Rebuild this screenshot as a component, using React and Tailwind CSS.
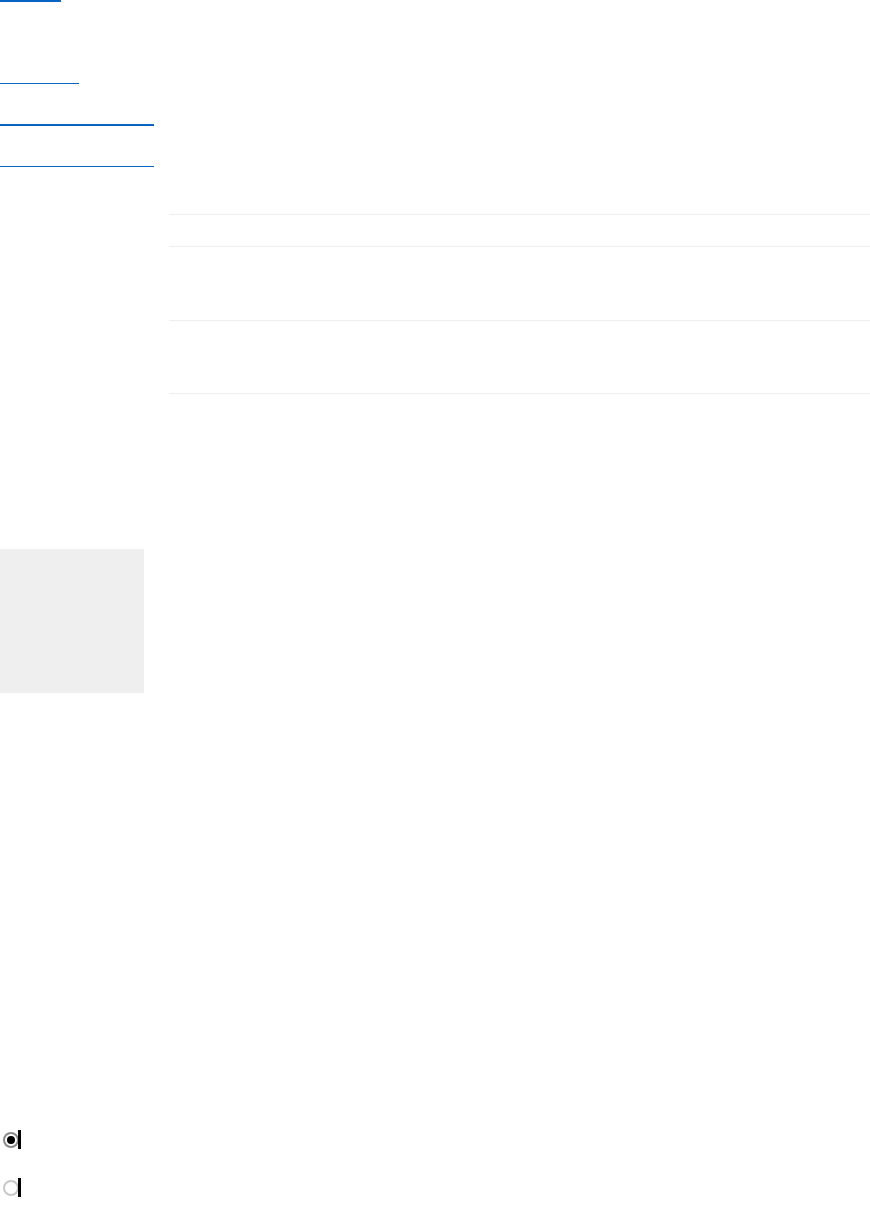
export default function App() {
  return (
    <div className="w-[870px] h-[1206px] bg-white overflow-hidden" style={{ fontFamily: '"Liberation Sans", Arial, sans-serif' }}>
      <div className="flex flex-col items-start">
        <div className="h-[2px] w-[61px] bg-[#0a64c4]" />
        <div className="mt-[81px] h-[1px] w-[79px] bg-[#0a64c4]" />
        <div className="mt-[40px] h-[2px] w-[154px] bg-[#0a64c4]" />
        <div className="mt-[40px] h-[1px] w-[154px] bg-[#0a64c4]" />
      </div>
      <div className="mt-[47px] ml-[169px] flex flex-col">
        <div className="h-[32px] border-t border-[#eeeeee]" />
        <div className="h-[74px] border-t border-[#eeeeee]" />
        <div className="h-[73px] border-t border-[#eeeeee]" />
        <div className="border-t border-[#eeeeee]" />
      </div>
      <div className="mt-[155px] w-[144px] h-[144px] bg-[#efefef]" />
      <div className="mt-[437px] flex flex-col gap-[29px]">
        <div className="flex items-center h-[19px]">
          <div className="ml-[3px] w-[16px] h-[16px] rounded-full border-2 border-[#8a8a8a] bg-white flex items-center justify-center">
            <div className="w-[8px] h-[8px] rounded-full bg-black" />
          </div>
          <div className="ml-[-1px] w-[3px] h-[19px] bg-black" />
        </div>
        <div className="flex items-center h-[19px]">
          <div className="ml-[3px] w-[16px] h-[16px] rounded-full border-2 border-[#c8c8c8] bg-white" />
          <div className="ml-[-1px] w-[3px] h-[19px] bg-black" />
        </div>
      </div>
    </div>
  );
}
